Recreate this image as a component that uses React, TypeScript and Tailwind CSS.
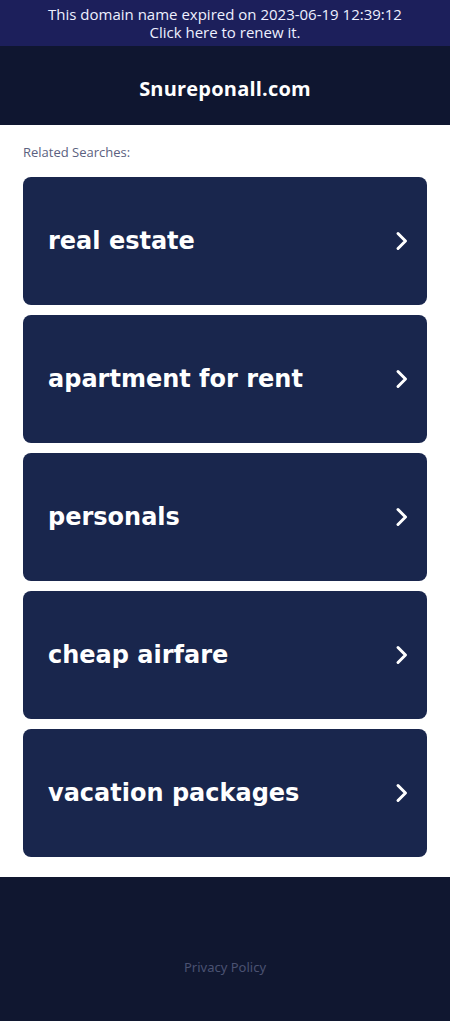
const searches = [
  "real estate",
  "apartment for rent",
  "personals",
  "cheap airfare",
  "vacation packages",
];

const Chevron = () => (
  <svg width="14" height="20" viewBox="0 0 14 20" fill="none" className="shrink-0">
    <path d="M3 2.5l7.5 7.5-7.5 7.5" stroke="white" strokeWidth="3" strokeLinecap="round" strokeLinejoin="round" />
  </svg>
);

export default function App() {
  return (
    <div className="w-full min-h-[1021px] bg-white flex flex-col">
      <div className="bg-[#1c1f5b] py-[5px] text-center text-[15px] leading-[18px] text-[#eef0ff] font-['Open_Sans',sans-serif] font-medium">
        <p>This domain name expired on 2023-06-19 12:39:12</p>
        <p>Click here to renew it.</p>
      </div>
      <header className="bg-[#0f1630] h-[79px] flex items-center justify-center pt-[7px]">
        <h1 className="text-white text-[20px] font-bold font-['Open_Sans',sans-serif] tracking-[0.2px]">
          Snureponall.com
        </h1>
      </header>
      <main className="px-[23px] pt-[19px] pb-[20px]">
        <p className="text-[13px] leading-[16px] text-[#5b6180] font-medium font-['Open_Sans',sans-serif] mb-[17px]">
          Related Searches:
        </p>
        <div className="flex flex-col gap-[10px]">
          {searches.map((s) => (
            <a
              key={s}
              className="h-[128px] rounded-[8px] bg-[#19264d] flex items-center justify-between pl-[25px] pr-[18px]"
            >
              <span className="text-white text-[24px] font-bold font-['DejaVu_Sans',sans-serif]">{s}</span>
              <Chevron />
            </a>
          ))}
        </div>
      </main>
      <footer className="bg-[#101730] flex-1 flex items-start justify-center pt-[81px] pb-[50px]">
        <a className="text-[13px] leading-[18px] text-[#4b5272] font-['Noto_Sans',sans-serif]">Privacy Policy</a>
      </footer>
    </div>
  );
}
